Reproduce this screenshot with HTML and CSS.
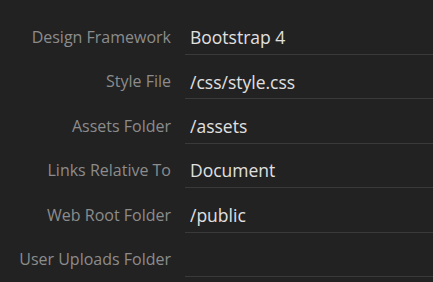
FILE: index.html
```
<!DOCTYPE html>
<html lang="en">
  <head>
    <meta charset="UTF-8" />
    <meta name="viewport" content="width=device-width, initial-scale=1.0" />
    <title>Site Settings</title>
    <link rel="stylesheet" href="styles.css">
  </head>
  <body>
    <form class="settings">
      <div class="field">
        <label for="framework">Design Framework</label>
        <input type="text" id="framework" value="Bootstrap 4" />
      </div>
      <div class="field">
        <label for="styleFile">Style File</label>
        <input type="text" id="styleFile" value="/css/style.css" />
      </div>
      <div class="field">
        <label for="assets">Assets Folder</label>
        <input type="text" id="assets" value="/assets" />
      </div>
      <div class="field">
        <label for="links">Links Relative To</label>
        <input type="text" id="links" value="Document" />
      </div>
      <div class="field">
        <label for="webRoot">Web Root Folder</label>
        <input type="text" id="webRoot" value="/public" />
      </div>
      <div class="field">
        <label for="uploads">User Uploads Folder</label>
        <input type="text" id="uploads" value="" />
      </div>
    </form>
  </body>
</html>
```

FILE: styles.css
```
html {
  background-color: #222222;
  font-family: "Open Sans", "Noto Sans", sans-serif;
}

body {
  margin: 0;
  padding: 0;
}

.settings {
  padding-top: 10.6px;
}

.field {
  display: grid;
  grid-template-columns: 171px 1fr;
  column-gap: 14px;
  height: 44.4px;
}

label {
  align-self: end;
  text-align: right;
  font-size: 16px;
  line-height: 20px;
  color: #8c8c8c;
  padding-bottom: 8px;
  white-space: nowrap;
}

input[type="text"] {
  box-sizing: border-box;
  height: 44.4px;
  margin: 0;
  padding: 15px 0 5px 5px;
  font-family: "Open Sans", "Noto Sans", sans-serif;
  font-size: 17.5px;
  line-height: 24px;
  color: #e0e0e0;
  background-color: transparent;
  border: none;
  border-bottom: 1px solid #3a3a3a;
  outline: none;
  width: 100%;
}
```
